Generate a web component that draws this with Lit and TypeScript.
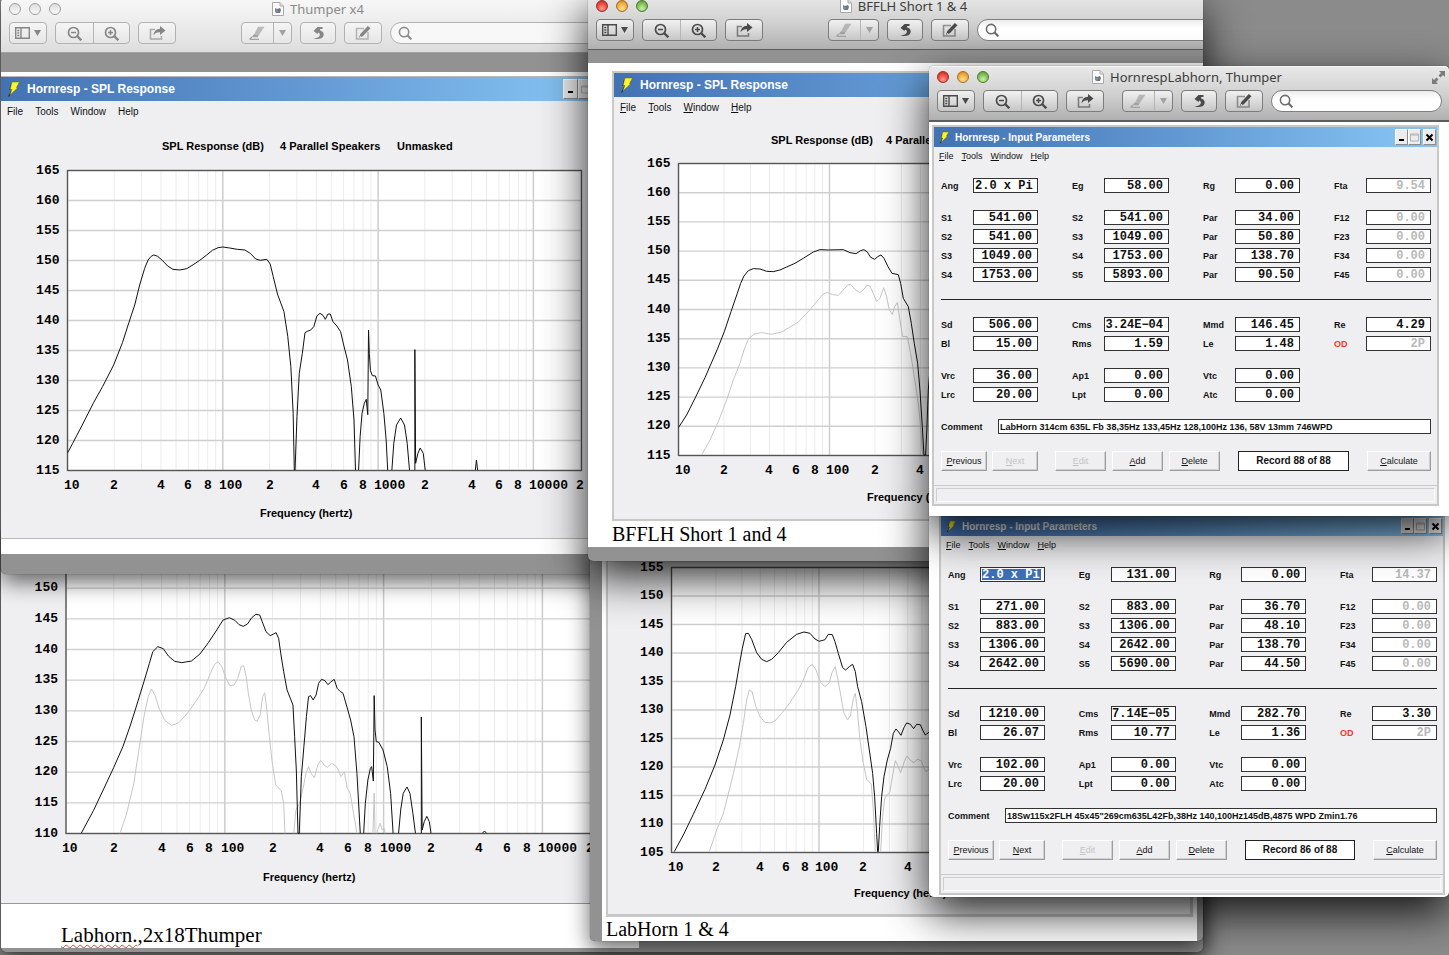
import { LitElement, html, svg, css, nothing } from "lit";
import { customElement, property } from "lit/decorators.js";
import { classMap } from "lit/directives/class-map.js";

/* ---------- chart data ---------- */

interface Trace {
  faint?: boolean;
  points: string[];
}

interface ChartConfig {
  view: [number, number, number, number];
  x0: number;
  decade: number;
  xEnd: number;
  top: number;
  bottom: number;
  dbTop: number;
  dbBottom: number;
  trace: string;
  titles: [number, number, string][];
  axisTitle: [number, number];
  series: Trace[];
}

const THUMPER: ChartConfig = {
  view: [1, 121, 609, 417],
  x0: 67.5, decade: 155.3, xEnd: 581.5, top: 170.5, bottom: 470.5, dbTop: 165, dbBottom: 115,
  trace: "translate(0 160) scale(.3827 .3333)",
  titles: [[162, 150, "SPL Response (dB)"], [280, 150, "4 Parallel Speakers"], [397, 150, "Unmasked"]],
  axisTitle: [260, 517],
  series: [{
    points: [
      "177,878 190,850 215,795 245,727 268,680 297,615 320,548 337,487 352,435 365,375 378,325 387,300 395,289 402,285 412,289 425,302 438,318 452,328 470,330 488,326 505,314 522,301 540,285 555,271 570,263 582,261 600,264 620,268 640,270 655,281 668,297 680,301 697,298 706,312 714,350 725,402 742,455 752,530 760,620 766,760 769,930 771,930 776,770 782,640 790,580 797,518 803,514 812,510 820,500 828,468 836,460 844,466 850,478 857,462 863,462 870,485 880,498 890,515 898,555 908,600 918,680 925,780 929,930",
      "937,930 941,830 946,760 952,730 957,718 961,764 963,510 965,580 968,632 973,647 981,648 988,675 995,690 1003,760 1009,840 1013,930",
      "1024,930 1029,850 1036,795 1047,774 1057,795 1064,850 1070,930",
      "1084,930 1084,569 1086,910 1092,880 1098,864 1106,880 1111,930",
      "1242,930 1245,900 1248,930",
    ],
  }],
};

const THUMPER_PAIR: ChartConfig = {
  view: [1, 530, 638, 373],
  x0: 66, decade: 158.8, xEnd: 600, top: 557.5, bottom: 833.5, dbTop: 155, dbBottom: 110,
  trace: "translate(0 550) scale(.4209 .3333)",
  titles: [],
  axisTitle: [263, 881],
  series: [
    {
      faint: true,
      points: [
        "285,850 300,795 318,700 330,600 342,500 352,440 360,417 368,435 378,475 392,512 408,526 425,518 445,490 465,455 485,415 500,370 510,343 518,335 527,350 537,385 546,407 556,405 565,385 573,350 579,347 585,380 590,430 597,480 605,510 611,514 618,495 624,440 629,428 634,480 640,560 647,640 655,705 668,722 674,760 677,850",
        "698,850 703,780 712,760 720,715 727,670 733,650 740,672 747,683 755,645 762,631 770,645 778,652 788,640 798,648 804,660 810,680 818,665 825,715 832,730 840,790 848,850",
        "886,850 889,730 891,850",
        "895,850 898,838 903,820 908,840 913,835 915,850",
      ],
    },
    {
      points: [
        "193,850 222,782 247,715 270,653 292,590 310,525 325,465 342,395 355,340 363,305 375,290 388,296 400,318 415,334 432,338 455,333 475,312 495,278 515,240 530,210 545,203 558,211 568,224 578,229 588,222 598,203 608,193 617,195 623,215 632,245 642,257 650,252 656,248 662,265 667,310 674,365 682,420 696,465 700,560 704,660 708,850 711,850 716,680 722,590 728,500 733,440 738,437 744,450 751,435 757,400 764,388 772,392 779,404 786,396 794,388 801,415 808,424 815,430 823,465 833,510 841,560 848,670 856,850",
        "864,850 868,760 874,690 880,655 883,650 887,693 889,437 891,540 894,575 900,577 910,600 920,650 928,730 934,850",
        "947,850 952,780 958,730 967,711 974,730 981,790 987,850",
        "1001,850 1001,501 1003,840 1008,815 1014,799 1020,815 1024,850",
        "1146,850 1151,843 1156,850",
      ],
    },
  ],
};

const BFFLH: ChartConfig = {
  view: [614, 117, 580, 402],
  x0: 678.5, decade: 151, xEnd: 1180, top: 163.5, bottom: 455.5, dbTop: 165, dbBottom: 115,
  trace: "translate(580 150) scale(.3333)",
  titles: [[771, 144, "SPL Response (dB)"], [886, 144, "4 Parallel Speakers"]],
  axisTitle: [867, 501],
  series: [
    {
      faint: true,
      points: [
        "366,913 390,870 415,815 440,750 460,690 480,640 492,600 505,568 522,552 545,548 575,553 605,546 635,528 655,516 685,485 710,455 728,434 742,427 758,434 775,436 790,420 803,405 813,404 825,418 840,428 852,418 860,406 870,408 880,430 890,455 900,445 911,413 920,440 928,480 937,493 944,470 952,458 960,510 968,560 982,560 992,610 1003,680 1015,760 1022,830 1028,913",
      ],
    },
    {
      points: [
        "296,832 320,795 350,735 375,683 412,598 433,545 453,485 472,430 482,400 492,378 505,362 520,356 540,357 560,364 580,365 600,360 620,351 645,340 670,325 700,306 720,299 745,300 790,299 810,308 828,311 842,302 852,299 862,306 872,322 884,328 893,320 903,315 912,325 924,350 936,370 955,374 962,400 970,445 985,470 994,520 1003,580 1013,640 1020,720 1027,830 1032,915 1037,915 1041,830 1045,720 1055,600",
      ],
    },
  ],
};

const LABHORN: ChartConfig = {
  view: [608, 545, 584, 369],
  x0: 671.5, decade: 147.5, xEnd: 1160, top: 567.5, bottom: 852.5, dbTop: 155, dbBottom: 105,
  trace: "translate(580 550) scale(.3333)",
  titles: [],
  axisTitle: [854, 897],
  series: [
    {
      faint: true,
      points: [
        "388,905 410,840 430,790 448,720 465,650 478,590 490,520 500,450 508,420 516,425 528,470 540,500 555,517 570,519 585,513 605,490 630,458 655,420 670,390 685,352 697,343 708,360 722,397 735,410 748,398 757,365 766,350 774,390 783,440 792,490 803,510 812,495 820,445 826,430 832,480 840,570 850,640 860,688 874,702 880,780 886,905",
        "902,905 908,800 914,745 930,725 938,675 946,632 955,650 962,668 973,635 981,618 992,632 1002,638 1012,628 1024,632 1032,655 1038,665 1056,650",
      ],
    },
    {
      points: [
        "283,905 310,855 340,793 375,718 405,645 430,570 450,495 467,410 478,345 487,295 497,251 505,250 515,268 530,308 545,328 560,335 575,328 595,308 620,277 650,253 672,246 690,250 705,267 718,274 735,269 745,253 757,254 765,275 775,310 788,353 797,360 808,350 818,343 826,365 833,410 845,455 858,530 868,600 878,670 884,740 890,850 893,905 895,905 899,830 905,740 912,680 922,630 932,595 940,550 948,537 956,546 963,556 972,533 980,519 990,522 1001,536 1010,523 1021,524 1028,540 1036,555 1056,540",
      ],
    },
  ],
};

/* ---------- SPL chart ---------- */

@customElement("spl-chart")
export class SplChart extends LitElement {
  @property({ attribute: false }) config!: ChartConfig;

  static styles = css`
    :host { display: block; }
    svg { display: block; }
    .plot { fill: #fff; stroke: none; }
    .minor { stroke: #ececee; stroke-width: 1; }
    .major { stroke: #cdcdcd; stroke-width: 1.5; }
    .level { stroke: #cfcfcf; stroke-width: 1.4; }
    .frame { fill: none; stroke: #555; stroke-width: 1.3; }
    .curve { fill: none; stroke: #111; stroke-width: 1; vector-effect: non-scaling-stroke; }
    .faint { stroke: #c6c6c6; }
    .tick { font: bold 13px "Liberation Mono", monospace; fill: #000; }
    .heading { font: bold 11px "Liberation Sans", Arial, sans-serif; fill: #000; }
  `;

  render() {
    const c = this.config;
    const [vx, vy, vw, vh] = c.view;
    const step = ((c.bottom - c.top) / (c.dbTop - c.dbBottom)) * 5;
    const levels = Array.from({ length: (c.dbTop - c.dbBottom) / 5 + 1 }, (_, i) => i);
    const freqs: { x: number; n: number; label: string }[] = [];
    for (let d = 0; d < 4; d++) {
      for (let n = 1; n < 10; n++) {
        const x = c.x0 + c.decade * (d + Math.log10(n));
        if (x > c.xEnd + 1) continue;
        const label = n === 1 ? String(10 ** (d + 1)) : n % 2 === 0 ? String(n) : "";
        freqs.push({ x, n, label });
      }
    }
    return html`<svg width=${vw} height=${vh} viewBox="${vx} ${vy} ${vw} ${vh}" role="img" aria-label="SPL response chart">
      <rect class="plot" x=${c.x0} y=${c.top} width=${c.xEnd - c.x0} height=${c.bottom - c.top}></rect>
      ${freqs.map((f) => svg`<line class=${f.n === 1 ? "major" : "minor"} x1=${f.x} x2=${f.x} y1=${c.top} y2=${c.bottom}></line>`)}
      ${levels.map((i) => svg`<line class="level" x1=${c.x0} x2=${c.xEnd} y1=${c.top + i * step} y2=${c.top + i * step}></line>`)}
      <rect class="frame" x=${c.x0} y=${c.top} width=${c.xEnd - c.x0} height=${c.bottom - c.top}></rect>
      <g transform=${c.trace}>
        ${c.series.map((s) => s.points.map((p) => svg`<polyline class=${s.faint ? "curve faint" : "curve"} points=${p}></polyline>`))}
      </g>
      ${levels.map((i) => svg`<text class="tick" text-anchor="end" x=${c.x0 - 8} y=${Math.round(c.top + i * step) + 3}>${c.dbTop - i * 5}</text>`)}
      ${freqs.filter((f) => f.label).map((f) => svg`<text class="tick" x=${Math.round(f.x - 4)} y=${Math.round(c.bottom) + 18}>${f.label}</text>`)}
      ${c.titles.map(([x, y, t]) => svg`<text class="heading" x=${x} y=${y}>${t}</text>`)}
      <text class="heading" x=${c.axisTitle[0]} y=${c.axisTitle[1]}>Frequency (hertz)</text>
    </svg>`;
  }
}

/* ---------- Hornresp panel: title bar + menu ---------- */

@customElement("horn-panel")
export class HornPanel extends LitElement {
  @property() name = "";
  @property({ type: Boolean, reflect: true }) small = false;
  @property({ type: Boolean }) plain = false;
  @property({ type: Boolean }) bare = false;

  static styles = css`
    :host {
      display: block;
      background: #efeff1;
      font-family: "Liberation Sans", Arial, sans-serif;
      color: #111;
    }
    .bar {
      display: flex;
      align-items: center;
      gap: 7px;
      height: 24px;
      padding: 0 1px 0 6px;
      background: linear-gradient(90deg, #4372b3, #5f95d0 45%, #83c0f0 92%);
      color: #fff;
      font-size: 12px;
      font-weight: bold;
    }
    :host([small]) .bar { height: 20px; font-size: 10px; gap: 6px; }
    :host([small]) .bolt { width: 10px; height: 13px; margin-left: -1px; }
    .name { flex: 1; white-space: nowrap; }
    .bolt { width: 13px; height: 16px; flex: none; }
    .controls { display: flex; }
    .ctl {
      width: 15px;
      height: 20px;
      padding: 0;
      border: 1px solid;
      border-color: #fff #8c8c8c #8c8c8c #fff;
      background: #ececee;
      display: grid;
      place-items: center;
    }
    :host([small]) .ctl { width: 13px; height: 16px; }
    .ctl:last-child { margin-left: 2px; }
    .ctl svg { width: 9px; height: 9px; display: block; }
    .menu { display: flex; align-items: center; gap: 12px; height: 20px; padding: 0 6px; font-size: 10px; }
    :host([small]) .menu { height: 18px; gap: 8px; padding: 0 5px; font-size: 9px; margin-bottom: -2px; }
    .item { border: 0; padding: 0; background: none; color: inherit; font: inherit; }
  `;

  render() {
    const items = ["File", "Tools", "Window", "Help"];
    return html`
      ${this.bare
        ? nothing
        : html`<div class="bar">
              <svg class="bolt" viewBox="0 0 13 16" aria-hidden="true">
                <path d="M4.200 2L2.500 9H4.500L1 15.500 2.500 15.200 4 13z" fill="#1a1a1a"></path>
                <path d="M5 1h7.500L9.500 6.500H11L2.500 14.500 5 8.500H3z" fill="#fbf52f" stroke="#5f6320" stroke-width=".5"></path>
              </svg>
              <span class="name">${this.name}</span>
              <span class="controls">
                <button class="ctl" aria-label="Minimise"><svg viewBox="0 0 9 9"><path d="M2 7h5" stroke="#000" stroke-width="2"></path></svg></button>
                <button class="ctl" aria-label="Maximise"><svg viewBox="0 0 9 9"><path d="M.5 1h8v7h-8zM.5 2h8" fill="none" stroke="#b4b4b4"></path></svg></button>
                <button class="ctl" aria-label="Close"><svg viewBox="0 0 9 9"><path d="M1.500 1.500l6 6m0-6l-6 6" stroke="#000" stroke-width="2"></path></svg></button>
              </span>
            </div>
            <nav class="menu">
              ${items.map((t) => html`<button class="item">${this.plain ? t : html`<u>${t[0]}</u>${t.slice(1)}`}</button>`)}
            </nav>`}
      <slot></slot>
    `;
  }
}

/* ---------- parameter form ---------- */

interface Field {
  label: string;
  value: string;
  off?: boolean;
  red?: boolean;
  left?: boolean;
  selected?: boolean;
}

interface RecordData {
  index: number;
  groups: Field[][][];
  comment: string;
  nextOff?: boolean;
}

const row = (labels: string, values: string): Field[] => {
  const l = labels.split(" ");
  return values.split(" ").map((value, i) => ({ label: l[i], value }));
};

const off = (fields: Field[]): Field[] =>
  fields.map((f, i) => (i === 3 ? { ...f, off: true, red: f.label === "OD" } : f));

const angle = (selected: boolean, fields: Field[]): Field[] => [
  { label: "Ang", value: "2.0 x Pi", left: true, selected },
  ...fields.map((f, i) => (i === 2 ? { ...f, off: true } : f)),
];

const RECORD_88: RecordData = {
  index: 88,
  nextOff: true,
  comment: "LabHorn 314cm 635L Fb 38,35Hz 133,45Hz 128,100Hz 136, 58V 13mm 746WPD",
  groups: [
    [angle(false, row("Eg Rg Fta", "58.00 0.00 9.54"))],
    [
      off(row("S1 S2 Par F12", "541.00 541.00 34.00 0.00")),
      off(row("S2 S3 Par F23", "541.00 1049.00 50.80 0.00")),
      off(row("S3 S4 Par F34", "1049.00 1753.00 138.70 0.00")),
      off(row("S4 S5 Par F45", "1753.00 5893.00 90.50 0.00")),
    ],
    [row("Sd Cms Mmd Re", "506.00 3.24E−04 146.45 4.29"), off(row("Bl Rms Le OD", "15.00 1.59 1.48 2P"))],
    [row("Vrc Ap1 Vtc", "36.00 0.00 0.00"), row("Lrc Lpt Atc", "20.00 0.00 0.00")],
  ],
};

const RECORD_86: RecordData = {
  index: 86,
  comment: "18Sw115x2FLH 45x45\"269cm635L42Fb,38Hz 140,100Hz145dB,4875 WPD Zmin1.76",
  groups: [
    [angle(true, row("Eg Rg Fta", "131.00 0.00 14.37"))],
    [
      off(row("S1 S2 Par F12", "271.00 883.00 36.70 0.00")),
      off(row("S2 S3 Par F23", "883.00 1306.00 48.10 0.00")),
      off(row("S3 S4 Par F34", "1306.00 2642.00 138.70 0.00")),
      off(row("S4 S5 Par F45", "2642.00 5690.00 44.50 0.00")),
    ],
    [row("Sd Cms Mmd Re", "1210.00 7.14E−05 282.70 3.30"), off(row("Bl Rms Le OD", "26.07 10.77 1.36 2P"))],
    [row("Vrc Ap1 Vtc", "102.00 0.00 0.00"), row("Lrc Lpt Atc", "20.00 0.00 0.00")],
  ],
};

@customElement("param-form")
export class ParamForm extends LitElement {
  @property({ attribute: false }) data!: RecordData;

  static styles = css`
    :host { display: block; font: bold 9px "Liberation Sans", Arial, sans-serif; color: #111; }
    .form { display: flex; flex-direction: column; gap: 17px; padding: 15px 6px 0 7px; }
    .group { display: flex; flex-direction: column; gap: 4px; }
    .row { display: grid; grid-template-columns: repeat(4, 97px); justify-content: space-between; }
    .cell { display: grid; grid-template-columns: 32px 65px; align-items: center; }
    .red { color: #f2352b; }
    input {
      box-sizing: border-box;
      width: 100%;
      min-width: 0;
      height: 15px;
      margin: 0;
      border: 1px solid #333;
      border-radius: 0;
      background: #fff;
      color: #111;
    }
    .num { padding: 0 5px 0 0; text-align: right; font: bold 12px "Liberation Mono", monospace; }
    .left { padding: 0 0 0 1px; text-align: left; }
    .off { color: #b9b9b9; }
    .selected {
      color: #fff;
      background: linear-gradient(#3d70b5, #3d70b5) 1px 1px / 59px 11px no-repeat #fff;
    }
    .rule { height: 1px; margin: 0; border: 0; background: #222; }
    .comment { display: grid; grid-template-columns: 57px 1fr; align-items: center; }
    .comment input { padding: 0 1px; font: inherit; }
    .actions { display: flex; height: 20px; }
    .actions button {
      padding: 0;
      border: 1px solid;
      border-color: #fff #9c9c9c #9c9c9c #fff;
      box-shadow: inset -1px -1px 0 #d0d0d2;
      background: #efeff1;
      color: #111;
      font: 9px "Liberation Sans", Arial, sans-serif;
    }
    .actions button:disabled { color: #c4c4c6; }
    .nav { display: flex; gap: 5px; }
    .nav button { width: 46px; }
    .edit { display: flex; gap: 6px; margin-left: 17px; }
    .edit button { width: 51px; }
    .record {
      flex: 1;
      box-sizing: border-box;
      margin: 0 18px;
      border: 1px solid #222;
      background: #fff;
      font-size: 10px;
      line-height: 18px;
      text-align: center;
    }
    .actions .calc { width: 64px; }
    .status { margin-top: 14px; padding: 2px; border-top: 1px solid #c9c9cb; }
    .well { height: 12px; border: 1px solid; border-color: #cfcfd1 #fafafa #fafafa #cfcfd1; }
  `;

  render() {
    const d = this.data;
    const key = (t: string) => html`<u>${t[0]}</u>${t.slice(1)}`;
    const group = (rows: Field[][]) => html`<div class="group">
      ${rows.map(
        (r) => html`<div class="row">
          ${r.map(
            (f) => html`<label class="cell">
              <span class=${classMap({ red: !!f.red })}>${f.label}</span>
              <input
                class=${classMap({ num: true, left: !!f.left, off: !!f.off, selected: !!f.selected })}
                .value=${f.value}
                ?readonly=${!!f.off}
              />
            </label>`
          )}
        </div>`
      )}
    </div>`;
    return html`
      <div class="form">
        ${d.groups.slice(0, 2).map(group)}
        <hr class="rule" />
        ${d.groups.slice(2).map(group)}
        <label class="comment"><span>Comment</span><input .value=${d.comment} /></label>
        <div class="actions">
          <span class="nav">
            <button>${key("Previous")}</button>
            <button ?disabled=${!!d.nextOff}>${key("Next")}</button>
          </span>
          <span class="edit">
            <button disabled>${key("Edit")}</button>
            <button>${key("Add")}</button>
            <button>${key("Delete")}</button>
          </span>
          <output class="record">Record ${d.index} of 88</output>
          <button class="calc">${key("Calculate")}</button>
        </div>
      </div>
      <div class="status"><div class="well"></div></div>
    `;
  }
}

/* ---------- Preview window header ---------- */

@customElement("preview-header")
export class PreviewHeader extends LitElement {
  @property() name = "";
  @property({ type: Boolean, reflect: true }) inactive = false;
  @property({ type: Boolean, reflect: true }) wide = false;
  @property({ type: Boolean, reflect: true }) shifted = false;

  static styles = css`
    :host {
      display: block;
      height: 54px;
      border-bottom: 1px solid #5d5d5d;
      border-radius: 5px 5px 0 0;
      background: linear-gradient(#e9e9e9, #cfcfcf 55%, #b0b0b0);
      box-shadow: inset 0 1px 0 #f6f6f6;
      color: #3c3c3c;
      font-family: "Noto Sans", "Open Sans", sans-serif;
    }
    :host([inactive]) { background: linear-gradient(#f8f8f8, #dedede); color: #8a8a8a; border-color: #a0a0a0; }
    .title { display: grid; grid-template-columns: 60px 1fr 72px; align-items: center; height: 22px; padding: 0 0 0 8px; }
    :host([shifted]) .title { padding-left: 28px; }
    :host([shifted]) .lights { margin-left: -20px; }
    .lights { display: flex; gap: 8px; }
    .light { box-sizing: border-box; width: 12px; height: 12px; padding: 0; border-radius: 50%; border: 1px solid; }
    .red { border-color: #9a2c25; background: radial-gradient(circle at 50% 75%, #ff9a90, #e8423a 60%, #c02c26); }
    .amber { border-color: #a86c1e; background: radial-gradient(circle at 50% 75%, #ffe095, #eda93a 60%, #c9811f); }
    .green { border-color: #4c7a2c; background: radial-gradient(circle at 50% 75%, #cdf0a5, #7dbb55 60%, #56913a); }
    :host([inactive]) .light { border-color: #a0a0a0; background: linear-gradient(#dcdcdc, #fafafa); }
    .name {
      display: flex;
      justify-content: center;
      align-items: center;
      gap: 6px;
      font-size: 13px;
      line-height: 20px;
      white-space: nowrap;
    }
    .doc { width: 12px; height: 14px; }
    .full { justify-self: end; width: 15px; height: 15px; padding: 0; margin-right: 3px; border: 0; background: none; }
    .full svg { display: block; }
    .tools { display: flex; gap: 8px; height: 22px; margin-top: 2px; padding: 0 7px 0 8px; }
    .group {
      box-sizing: border-box;
      display: flex;
      flex: none;
      border: 1px solid #7c7c7c;
      border-radius: 4px;
      background: linear-gradient(#f1f1f1, #c6c6c6);
      color: #4a4a4a;
    }
    :host([inactive]) .group { border-color: #b2b2b2; background: linear-gradient(#f5f5f5, #e6e6e6); color: #868686; }
    .btn { width: 36px; padding: 0; border: 0; background: none; color: inherit; display: flex; justify-content: center; align-items: center; gap: 4px; }
    .btn + .btn { border-left: 1px solid #b4b4b4; }
    .half { width: 37px; }
    .slim { width: 34px; }
    .pen { width: 31px; }
    .drop { width: 18px; }
    .group .dim { color: #a2a2a2; }
    .btn svg { display: block; flex: none; }
    .mark { margin-left: 10px; }
    :host([wide]) .mark { margin-left: 57px; }
    .search {
      box-sizing: border-box;
      flex: 1 1 0;
      min-width: 0;
      display: flex;
      align-items: center;
      gap: 4px;
      padding: 0 7px;
      border: 1px solid #7f7f7f;
      border-radius: 11px;
      background: linear-gradient(#ececec, #fff 40%);
      color: #6c6c6c;
    }
    :host([wide]) .search { margin-right: -30px; }
    :host([inactive]) .search { border-color: #b2b2b2; background: #f8f8f8; color: #8d8d8d; }
    .search svg { flex: none; display: block; }
    .search input { flex: 1 1 0; width: 0; min-width: 0; padding: 0; border: 0; outline: 0; background: none; font: 12px "Noto Sans", sans-serif; }
  `;

  render() {
    const lens = (inner: unknown) => svg`<circle cx="6.500" cy="6.500" r="5" fill="none" stroke="currentColor" stroke-width="1.700"></circle><path d="M10.300 10.300l4 4" stroke="currentColor" stroke-width="2.300"></path>${inner}`;
    return html`
      <div class="title">
        <span class="lights">
          <button class="light red" aria-label="Close"></button>
          <button class="light amber" aria-label="Minimise"></button>
          <button class="light green" aria-label="Zoom"></button>
        </span>
        <span class="name">
          <svg class="doc" viewBox="0 0 12 14" aria-hidden="true">
            <path d="M.5.5h7.500l3.500 3.500v9.500H.5z" fill="#fdfdfd" stroke="#a8a8a8"></path>
            <path d="M8 .5V4h3.500" fill="#e4e4e4" stroke="#a8a8a8"></path>
            <path d="M3 6l2 1 3-1 1 2-1 3H4L3 9z" fill="#777"></path>
            <circle cx="4.500" cy="9" r="1.500" fill="#5b94cf"></circle>
          </svg>
          <span>${this.name}</span>
        </span>
        ${this.wide
          ? nothing
          : html`<button class="full" aria-label="Full screen">
              <svg width="15" height="15" viewBox="0 0 15 15" fill="#7b7b7b">
                <path d="M8 1h6v6l-2-2-2.500 2.500-2-2L10 3zM1 8l2 2 2.500-2.500 2 2L5 12l2 2H1z"></path>
              </svg>
            </button>`}
      </div>
      <div class="tools">
        <span class="group">
          <button class="btn" aria-label="Sidebar">
            <svg width="15" height="12" viewBox="0 0 15 12" fill="none" stroke="currentColor" stroke-width="1.400">
              <path d="M.7.7h13.600v10.600H.7zM6 .7v10.600"></path><path d="M2.300 3.500h2M2.300 6h2M2.300 8.500h2"></path>
            </svg>
            <svg width="7" height="6" viewBox="0 0 7 6" fill="currentColor"><path d="M0 0h7L3.500 6z"></path></svg>
          </button>
        </span>
        <span class="group">
          <button class="btn half" aria-label="Zoom out"><svg width="15" height="15" viewBox="0 0 15 15">${lens(svg`<path d="M4 6.500h5" stroke="currentColor" stroke-width="1.500"></path>`)}</svg></button>
          <button class="btn" aria-label="Zoom in"><svg width="15" height="15" viewBox="0 0 15 15">${lens(svg`<path d="M4 6.500h5M6.500 4v5" stroke="currentColor" stroke-width="1.500"></path>`)}</svg></button>
        </span>
        <span class="group">
          <button class="btn" aria-label="Share">
            <svg width="17" height="14" viewBox="0 0 17 14">
              <path d="M6 3.500H1.500V13h11v-3" fill="none" stroke="currentColor" stroke-opacity=".65" stroke-width="1.600"></path>
              <path d="M11 0l5.500 4.500L11 9V6.200C8 6 6 7 4.500 9.500 4.800 5.500 7 3 11 2.800z" fill="currentColor"></path>
            </svg>
          </button>
        </span>
        <span class="group mark">
          <button class="btn pen dim" aria-label="Highlight">
            <svg width="17" height="14" viewBox="0 0 17 14">
              <path d="M9 .8h6.500L9.500 9.500 5.500 8z" fill="currentColor" fill-opacity=".7"></path>
              <path d="M5.500 8l4 1.500-1 1.800H4L3 10.500z" fill="currentColor"></path>
              <path d="M.5 13.200L3 11M1 13.300h9" stroke="currentColor" stroke-width="1.200"></path>
            </svg>
          </button>
          <button class="btn drop dim" aria-label="Highlight options">
            <svg width="7" height="6" viewBox="0 0 7 6" fill="currentColor"><path d="M0 0h7L3.500 6z"></path></svg>
          </button>
        </span>
        <span class="group">
          <button class="btn slim" aria-label="Rotate">
            <svg width="13" height="14" viewBox="0 0 13 14">
              <path d="M1.500 5L5.500 1H10.500V3H8.300L7.800 4.200C11 5 12.300 7.500 11.500 9.800 10.500 13 5.500 14 1.500 12.200 4.500 12.400 7.300 11.500 7.800 9.300 8.100 7.800 7.500 7 6.200 6.600L5.500 8z" fill="currentColor"></path>
            </svg>
          </button>
        </span>
        <span class="group">
          <button class="btn" aria-label="Edit">
            <svg width="16" height="14" viewBox="0 0 16 14">
              <path d="M9 2.500H1.500V13h11.500V6" fill="none" stroke="currentColor" stroke-opacity=".55" stroke-width="1.600"></path>
              <path d="M12.800 0l2.700 2.200-7.700 8-3.800 1.600 1.300-3.900z" fill="currentColor"></path>
              <path d="M5 10l1 1" stroke="#eee" stroke-width=".8"></path>
            </svg>
          </button>
        </span>
        <label class="search">
          <svg width="14" height="14" viewBox="0 0 15 15">${lens(nothing)}</svg>
          <input type="text" aria-label="Search" />
        </label>
      </div>
    `;
  }
}

/* ---------- desktop ---------- */

@customElement("app-root")
export class AppRoot extends LitElement {
  static styles = css`
    :host {
      display: block;
      position: relative;
      height: 100vh;
      overflow: hidden;
      background: #8b8b8b;
    }
    /* free-floating windows on the desktop */
    .window {
      position: absolute;
      box-shadow: 0 16px 44px rgba(0, 0, 0, 0.85), 0 0 1px rgba(0, 0, 0, 0.8);
      background: #929292;
    }
    .clip { overflow: hidden; }
    .quiet { box-shadow: 0 8px 22px rgba(0, 0, 0, 0.6), 0 0 1px rgba(0, 0, 0, 0.7); }
    .w-pair { left: 1px; top: 530px; width: 1202px; padding-bottom: 4px; border-radius: 0 0 5px 5px; }
    .w-thumper { left: 1px; top: -2px; width: 638px; border-radius: 5px; }
    .w-labhorn { left: 590px; top: 545px; width: 613px; border-radius: 0 0 5px 5px; }
    .w-bfflh { left: 588px; top: -5px; width: 615px; border-radius: 5px; }
    .w-back { left: 929px; top: 511px; right: 0; border-radius: 0 0 5px 5px; background: #fff; }
    .w-front { left: 929px; top: 66px; right: 0; border-radius: 5px 5px 0 0; background: #fff; }
    .page { background: #fff; overflow: hidden; }
    .pair-page { width: 638px; }
    .thumper-page { margin: 19px 0 20px; padding: 4px 0 15px; }
    .thumper-panel { width: 610px; border: 1px solid #b9b9b9; border-left: 0; }
    .bfflh-page { margin: 13px 0 14px; padding: 8px 0 0 24px; }
    .bfflh-panel { width: 584px; box-sizing: border-box; border: 2px solid #c8c8c6; }
    .labhorn-page { margin: 0 6px 0 12px; padding: 0 4px 0 4px; }
    .labhorn-panel { border: solid #c8c8c8; border-width: 0 3px 3px 2px; }
    .pair-panel { border-bottom: 1px solid #999; }
    .caption { margin: 0; font: 20px/26px "Liberation Serif", "Times New Roman", serif; color: #000; }
    .tight { line-height: 24px; }
    .large { padding: 18px 0 0 60px; font-size: 21px; }
    .typo { text-decoration: underline wavy #e33 1px; text-underline-offset: 2px; }
    .form-page { padding: 3px 10px 10px 3px; }
    .back-page { padding: 3px 4px 2px 10px; }
    .form-panel { border: 2px solid #c8c8c8; }
    .front-header { border-bottom-width: 2px; }
  `;

  render() {
    return html`
      <section class="window quiet w-pair clip">
        <div class="page pair-page">
          <horn-panel class="pair-panel" bare><spl-chart .config=${THUMPER_PAIR}></spl-chart></horn-panel>
          <p class="caption large"><span class="typo">Labhorn.</span>,2x18Thumper</p>
        </div>
      </section>

      <section class="window quiet w-thumper">
        <preview-header name="Thumper x4" inactive wide></preview-header>
        <div class="page thumper-page">
          <horn-panel class="thumper-panel" name="Hornresp - SPL Response" plain>
            <spl-chart .config=${THUMPER}></spl-chart>
          </horn-panel>
        </div>
      </section>

      <section class="window quiet w-labhorn">
        <div class="page labhorn-page">
          <horn-panel class="labhorn-panel" bare><spl-chart .config=${LABHORN}></spl-chart></horn-panel>
          <p class="caption tight">LabHorn 1 &amp; 4</p>
        </div>
      </section>

      <section class="window w-bfflh">
        <div class="clip">
          <preview-header name="BFFLH Short 1 &amp; 4" wide shifted></preview-header>
          <div class="page bfflh-page">
            <horn-panel class="bfflh-panel" name="Hornresp - SPL Response">
              <spl-chart .config=${BFFLH}></spl-chart>
            </horn-panel>
            <p class="caption">BFFLH Short 1 and 4</p>
          </div>
        </div>
      </section>

      <section class="window w-back">
        <div class="back-page">
          <horn-panel class="form-panel" name="Hornresp - Input Parameters" small>
            <param-form .data=${RECORD_86}></param-form>
          </horn-panel>
        </div>
      </section>

      <section class="window w-front">
        <preview-header class="front-header" name="HornrespLabhorn, Thumper"></preview-header>
        <div class="form-page">
          <horn-panel class="form-panel" name="Hornresp - Input Parameters" small>
            <param-form .data=${RECORD_88}></param-form>
          </horn-panel>
        </div>
      </section>
    `;
  }
}
